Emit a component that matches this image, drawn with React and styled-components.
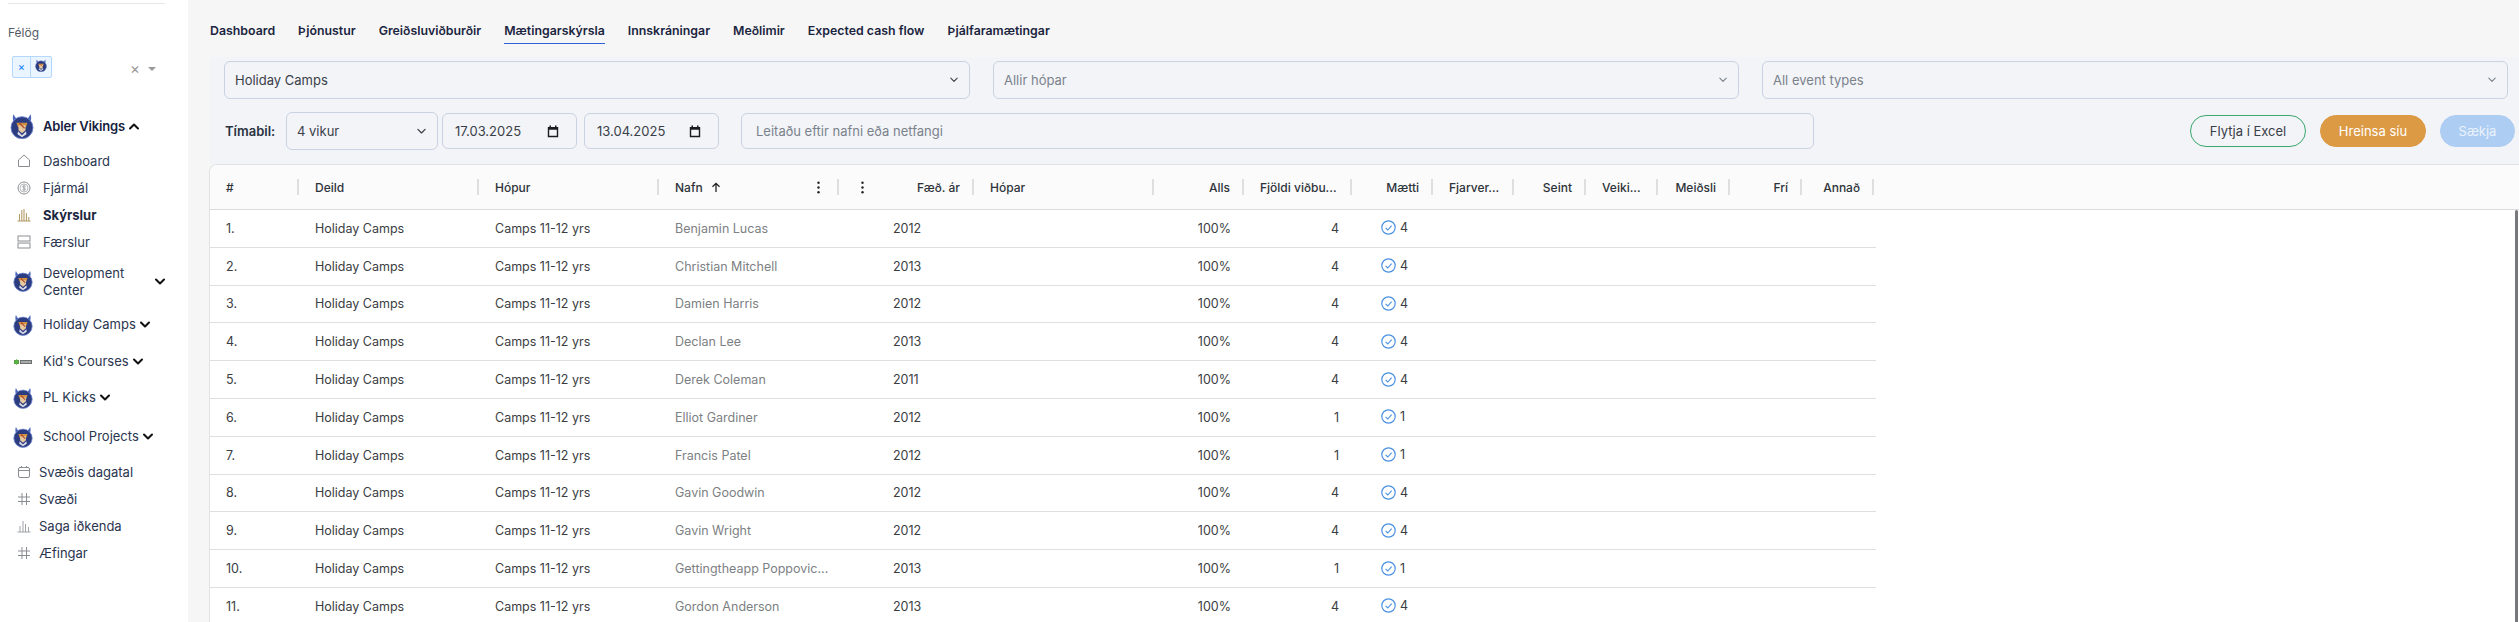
import React from "react";
import styled, { createGlobalStyle } from "styled-components";

const Global = createGlobalStyle`
  html, body { margin: 0; padding: 0; background: #fff; }
  body { font-family: "Inter", "Liberation Sans", sans-serif; font-size: 13px; color: #333; }
  #root { width: 2519px; height: 622px; overflow: hidden; }
`;

const Page = styled.div`
  display: flex;
  width: 2519px;
  height: 622px;
  overflow: hidden;
`;

/* ---------- sidebar ---------- */
const Sidebar = styled.aside`
  flex: 0 0 188px;
  background: #fff;
  color: #1f2a44;
  display: flex;
  flex-direction: column;
`;
const Rule = styled.hr`
  border: 0;
  height: 1px;
  background: #e6e7ea;
  margin: 3px 23px 0 8px;
`;
const FieldLabel = styled.div`
  margin: 21px 0 0 8px;
  line-height: 16px;
  font-size: 12px;
  color: #555b66;
`;
const ClubPicker = styled.div`
  display: flex;
  align-items: center;
  margin: 15px 0 0 12px;
  height: 22px;
`;
const Tag = styled.div`
  display: flex;
  align-items: stretch;
  width: 40px;
  height: 22px;
  box-sizing: border-box;
  border: 1px solid #b3d7ff;
  border-radius: 2px;
  background: #ebf5ff;
`;
const TagRemove = styled.span`
  flex: 0 0 17px;
  display: flex;
  align-items: center;
  justify-content: center;
  color: #007eff;
  font-size: 11px;
  border-right: 1px solid #b3d7ff;
`;
const TagValue = styled.span`
  flex: 1;
  display: flex;
  align-items: center;
  justify-content: center;
  padding-bottom: 3px;
`;
const ClearMark = styled.span`
  margin: 3px 0 0 78px;
  color: #999;
  font-size: 15px;
  line-height: 16px;
`;
const Caret = styled.span`
  margin: 3px 0 0 8px;
  width: 0;
  height: 0;
  border-left: 4px solid transparent;
  border-right: 4px solid transparent;
  border-top: 4px solid #999;
`;
const GroupRow = styled.div`
  display: flex;
  align-items: center;
  min-height: ${(p) => p.$height || 37}px;
  margin-top: ${(p) => p.$top || 0}px;
  font-size: 13px;
  font-weight: ${(p) => (p.$strong ? 600 : 400)};
  letter-spacing: ${(p) => (p.$strong ? "-0.15px" : "0")};
  color: ${(p) => (p.$strong ? "#16213d" : "#2a3550")};
`;
const LogoSlot = styled.span`
  flex: 0 0 43px;
  display: flex;
  align-items: center;
  justify-content: center;
  padding-left: ${(p) => p.$inset || 0}px;
  box-sizing: border-box;
`;
const GroupName = styled.span`
  width: ${(p) => (p.$wrap ? "100px" : "auto")};
  padding-top: ${(p) => (p.$wrap ? "1px" : "0")};
  line-height: 17px;
`;
const GroupChevron = styled.span`
  display: flex;
  margin-left: ${(p) => p.$gap || 4}px;
  color: #111;
`;
const NavRow = styled.div`
  display: flex;
  align-items: center;
  height: 27px;
  margin-top: ${(p) => p.$top || 0}px;
  font-size: 13px;
  font-weight: ${(p) => (p.$active ? 700 : 400)};
  color: ${(p) => (p.$active ? "#1c2740" : "#2a3550")};
`;
const NavIcon = styled.span`
  flex: 0 0 ${(p) => p.$width || 43}px;
  box-sizing: border-box;
  padding-left: 17px;
  display: flex;
  align-items: center;
`;

/* ---------- main ---------- */
const Main = styled.main`
  flex: 1;
  min-width: 0;
  background: #f6f6f7;
  padding-left: 22px;
  display: flex;
  flex-direction: column;
`;
const Tabs = styled.nav`
  flex: 0 0 57px;
  box-sizing: border-box;
  display: flex;
  gap: 23px;
  padding-top: 22px;
`;
const Tab = styled.span`
  height: 21px;
  line-height: 18px;
  font-size: 12.35px;
  font-weight: 600;
  color: #1b2540;
  white-space: nowrap;
  box-sizing: content-box;
  border-bottom: 1px solid ${(p) => (p.$active ? "#2f62d9" : "transparent")};
`;
const FilterPanel = styled.section`
  flex: 0 0 107px;
  box-sizing: border-box;
  background: #f2f4f8;
  padding: 4px 4px 0 14px;
`;
const SelectGrid = styled.div`
  display: grid;
  grid-template-columns: repeat(3, 1fr);
  gap: 23px;
  padding-right: 7px;
`;
const Field = styled.div`
  display: flex;
  align-items: center;
  justify-content: space-between;
  box-sizing: border-box;
  height: ${(p) => p.$height || 38}px;
  width: ${(p) => (p.$width ? `${p.$width}px` : "auto")};
  margin-left: ${(p) => p.$left || 0}px;
  padding: 0 ${(p) => p.$right || 11}px 0 ${(p) => p.$pad || 10}px;
  border: 1px solid #c9d3e2;
  border-radius: 6px;
  font-size: 13px;
  color: ${(p) => (p.$muted ? "#7b828c" : "#3a4048")};
  white-space: nowrap;
`;
const ControlRow = styled.div`
  display: flex;
  align-items: center;
  height: 38px;
  margin-top: 13px;
`;
const PeriodLabel = styled.span`
  flex: 0 0 61px;
  margin-left: 1px;
  font-size: 13px;
  font-weight: 600;
  color: #2b3240;
`;
const ButtonGroup = styled.div`
  margin-left: auto;
  display: flex;
  gap: 14px;
`;
const Pill = styled.button`
  box-sizing: border-box;
  height: 32px;
  width: ${(p) => p.$width}px;
  padding: 0;
  border-radius: 16px;
  border: 1px solid ${(p) => p.$border};
  background: ${(p) => p.$bg};
  color: ${(p) => p.$color};
  font: 400 13px "Inter", "Liberation Sans", sans-serif;
`;

/* ---------- table ---------- */
const TRACKS = "89px 180px 180px 180px 135px 180px 90px 108px 81px 81px 72px 72px 72px 72px 72px";

const TableCard = styled.section`
  position: relative;
  flex: 1;
  min-height: 0;
  background: #fff;
  border-top: 1px solid #dfe1e4;
  border-left: 1px solid #dfe1e4;
  border-top-left-radius: 8px;
  overflow: hidden;
  margin-left: -1px;
`;
const HeaderBar = styled.div`
  height: 44px;
  background: #fbfbfb;
  border-bottom: 1px solid #dcdcdc;
  display: grid;
  grid-template-columns: ${TRACKS};
  align-items: center;
`;
const HeadCell = styled.div`
  display: flex;
  align-items: center;
  min-width: 0;
  height: 16px;
  padding-left: 16px;
  font-size: 12px;
  font-weight: 500;
  color: #2e333a;
`;
const HeadLabel = styled.span`
  flex: 1;
  min-width: 0;
  display: flex;
  align-items: center;
  justify-content: ${(p) => (p.$right ? "flex-end" : "flex-start")};
  margin-right: 12px;
  white-space: nowrap;
`;
const Kebab = styled.span`
  display: flex;
  color: #222;
  flex: 0 0 auto;
  margin: 0 ${(p) => p.$after || 0}px 0 ${(p) => p.$before || 0}px;
`;
const SortMark = styled.span`
  display: flex;
  margin-left: 8px;
`;
const Spacer = styled.span`
  flex: 1;
`;
const Sep = styled.span`
  flex: 0 0 2px;
  height: 16px;
  background: #dedfe1;
`;
const Row = styled.div`
  display: grid;
  grid-template-columns: ${TRACKS};
  align-items: center;
  width: 1666px;
  height: 37.8px;
  box-sizing: border-box;
  border-bottom: 1px solid #dedfe1;
`;
const Cell = styled.div`
  padding: 0 13px 0 ${(p) => p.$left || 16}px;
  min-width: 0;
  font-size: 12.5px;
  color: ${(p) => (p.$muted ? "#7d7f83" : "#3a3d42")};
  text-align: ${(p) => (p.$right ? "right" : "left")};
  white-space: nowrap;
`;
const Attended = styled.div`
  display: flex;
  align-items: center;
  gap: 4px;
  padding-left: 29px;
  margin-top: -1px;
  font-size: 12.5px;
  color: #3a3d42;
`;
const ScrollThumb = styled.div`
  position: absolute;
  top: 45px;
  right: 1px;
  bottom: 0;
  width: 3px;
  border-radius: 2px 2px 0 0;
  background: #77797c;
`;

/* ---------- drawings ---------- */
const Logo = ({ size = 20 }) => (
  <svg width={size} height={size * 1.1} viewBox="0 0 24 26" aria-hidden="true">
    <path d="M3.5 1 C2 5 3 9 6 10 L9 7 C6.5 6 5 4 3.5 1Z M20.5 1 C22 5 21 9 18 10 L15 7 C17.5 6 19 4 20.5 1Z" fill="#4a66bd" />
    <circle cx="12" cy="14.5" r="11" fill="#2c3c80" />
    <circle cx="12" cy="14.5" r="11" fill="none" stroke="#6f86d2" strokeWidth="0.9" />
    <path d="M6.5 9.5 H17.5 L16 14 H8Z" fill="#cf8f42" />
    <path d="M8.5 12 H15.5 V17 L12 20 L8.5 17Z" fill="#e7c9a0" />
    <path d="M8 18 L12 22 L16 18 L16.5 21 L12 24 L7.5 21Z" fill="#dcdce8" />
    <path d="M9.5 10 L14.5 15" stroke="#b2492b" strokeWidth="1.3" />
  </svg>
);
const StripLogo = () => (
  <svg width="18" height="6" viewBox="0 0 18 6" aria-hidden="true">
    <rect x="0" y="1" width="5" height="4" fill="#4f9e3d" />
    <path d="M2.5 0 L5 3 L2.5 6 L0 3Z" fill="#5fae49" />
    <rect x="6" y="1" width="12" height="4" fill="#6d7170" />
    <rect x="7" y="2.4" width="10" height="1.2" fill="#cfd2d0" />
  </svg>
);
const Chevron = ({ up, size = 10, width = 2 }) => (
  <svg width={size} height={size * 0.7} viewBox="0 0 10 7" fill="none" aria-hidden="true">
    <path d={up ? "M1 5.5 L5 1.5 L9 5.5" : "M1 1.5 L5 5.5 L9 1.5"} stroke="currentColor" strokeWidth={width} strokeLinecap="round" strokeLinejoin="round" />
  </svg>
);
const Glyph = ({ children, color = "#8a8d92" }) => (
  <svg width="14" height="14" viewBox="0 0 14 14" fill="none" stroke={color} strokeWidth="1" aria-hidden="true">{children}</svg>
);
const HomeIcon = () => <Glyph><path d="M1.5 6 L7 1 L12.5 6 V12.5 H1.5Z" /></Glyph>;
const MoneyIcon = () => (
  <Glyph>
    <circle cx="7" cy="7" r="6" />
    <circle cx="7" cy="7" r="4" strokeWidth="0.6" />
    <path d="M8.6 5.4 C8 4.6 5.6 4.6 5.6 6 C5.6 7.4 8.6 6.6 8.6 8 C8.6 9.4 6 9.4 5.4 8.6 M7 3.9 V10.1" strokeWidth="0.7" />
  </Glyph>
);
const ReportIcon = () => (
  <Glyph color="#b39a66">
    <path d="M0.5 13 H13.5" />
    <path d="M2.5 13 V6 M4.8 13 V2 M7 13 V1 M9.4 13 V5 M11.8 13 V9" strokeWidth="1.05" />
  </Glyph>
);
const RowsIcon = () => (
  <Glyph>
    <rect x="1" y="1" width="12" height="5" />
    <rect x="1" y="8" width="12" height="5" />
  </Glyph>
);
const CalendarIcon = () => (
  <Glyph>
    <rect x="1.5" y="2.5" width="11" height="10" rx="1.5" />
    <path d="M1.5 5.5 H12.5 M4.5 1 V3 M9.5 1 V3" />
  </Glyph>
);
const HashIcon = () => <Glyph><path d="M5 1 V13 M9.5 1 V13 M1 5 H13 M1 9.5 H13" /></Glyph>;
const BarsIcon = () => (
  <Glyph color="#a0a3a8">
    <path d="M0.5 13 H13.5 M3 13 V7 M6 13 V2 M8.5 13 V5 M11.5 13 V8" />
  </Glyph>
);
const DateGlyph = () => (
  <svg width="12" height="13" viewBox="0 0 12 13" aria-hidden="true">
    <path d="M0.8 2 H11.2 V12.2 H0.8Z M2.2 4.8 V10.8 H9.8 V4.8Z M2.5 0.5 H4 V2 H2.5Z M8 0.5 H9.5 V2 H8Z" fill="#1c1c1c" fillRule="evenodd" />
  </svg>
);
const KebabGlyph = () => (
  <svg width="3" height="13" viewBox="0 0 3 13" aria-hidden="true">
    <circle cx="1.5" cy="1.7" r="1.2" fill="currentColor" />
    <circle cx="1.5" cy="6.5" r="1.2" fill="currentColor" />
    <circle cx="1.5" cy="11.3" r="1.2" fill="currentColor" />
  </svg>
);
const SortUp = () => (
  <svg width="10" height="11" viewBox="0 0 10 11" fill="none" aria-hidden="true">
    <path d="M5 10 V1.5 M1.5 4.8 L5 1.3 L8.5 4.8" stroke="#222" strokeWidth="1.3" />
  </svg>
);
const CheckCircle = () => (
  <svg width="15" height="15" viewBox="0 0 15 15" fill="none" aria-hidden="true">
    <circle cx="7.5" cy="7.5" r="6.7" stroke="#4a90e2" strokeWidth="1.2" />
    <path d="M4.6 7.8 L6.8 10 L10.6 5.6" stroke="#4a90e2" strokeWidth="1.1" />
  </svg>
);

/* ---------- data ---------- */
const MEMBERS = [
  ["Benjamin Lucas", 2012, 4],
  ["Christian Mitchell", 2013, 4],
  ["Damien Harris", 2012, 4],
  ["Declan Lee", 2013, 4],
  ["Derek Coleman", 2011, 4],
  ["Elliot Gardiner", 2012, 1],
  ["Francis Patel", 2012, 1],
  ["Gavin Goodwin", 2012, 4],
  ["Gavin Wright", 2012, 4],
  ["Gettingtheapp Poppovic...", 2013, 1],
  ["Gordon Anderson", 2013, 4],
];
const TABS = ["Dashboard", "Þjónustur", "Greiðsluviðburðir", "Mætingarskýrsla", "Innskráningar", "Meðlimir", "Expected cash flow", "Þjálfaramætingar"];
const RIGHT_HEADS = [
  ["Alls", true], ["Fjöldi viðbu...", false], ["Mætti", true], ["Fjarver...", false], ["Seint", true],
  ["Veiki...", false], ["Meiðsli", true], ["Frí", true], ["Annað", true],
];

export default function App() {
  return (
    <Page>
      <Global />
      <Sidebar>
        <Rule />
        <FieldLabel>Félög</FieldLabel>
        <ClubPicker>
          <Tag>
            <TagRemove>×</TagRemove>
            <TagValue><Logo size={12} /></TagValue>
          </Tag>
          <ClearMark>×</ClearMark>
          <Caret />
        </ClubPicker>
        <GroupRow $strong $top={30}>
          <LogoSlot><Logo size={24} /></LogoSlot>
          <GroupName>Abler Vikings</GroupName>
          <GroupChevron><Chevron up /></GroupChevron>
        </GroupRow>
        <NavRow $top={2}><NavIcon><HomeIcon /></NavIcon>Dashboard</NavRow>
        <NavRow><NavIcon><MoneyIcon /></NavIcon>Fjármál</NavRow>
        <NavRow $active><NavIcon><ReportIcon /></NavIcon>Skýrslur</NavRow>
        <NavRow><NavIcon><RowsIcon /></NavIcon>Færslur</NavRow>
        <GroupRow $height={44} $top={4}>
          <LogoSlot $inset={3}><Logo size={20} /></LogoSlot>
          <GroupName $wrap>Development Center</GroupName>
          <GroupChevron $gap={12}><Chevron /></GroupChevron>
        </GroupRow>
        <GroupRow $top={3}>
          <LogoSlot $inset={3}><Logo size={20} /></LogoSlot>
          <GroupName>Holiday Camps</GroupName>
          <GroupChevron><Chevron /></GroupChevron>
        </GroupRow>
        <GroupRow>
          <LogoSlot $inset={3}><StripLogo /></LogoSlot>
          <GroupName>Kid's Courses</GroupName>
          <GroupChevron><Chevron /></GroupChevron>
        </GroupRow>
        <GroupRow $top={-1}>
          <LogoSlot $inset={3}><Logo size={20} /></LogoSlot>
          <GroupName>PL Kicks</GroupName>
          <GroupChevron><Chevron /></GroupChevron>
        </GroupRow>
        <GroupRow $top={2}>
          <LogoSlot $inset={3}><Logo size={20} /></LogoSlot>
          <GroupName>School Projects</GroupName>
          <GroupChevron><Chevron /></GroupChevron>
        </GroupRow>
        <NavRow $top={3}><NavIcon $width={39}><CalendarIcon /></NavIcon>Svæðis dagatal</NavRow>
        <NavRow><NavIcon $width={39}><HashIcon /></NavIcon>Svæði</NavRow>
        <NavRow><NavIcon $width={39}><BarsIcon /></NavIcon>Saga iðkenda</NavRow>
        <NavRow><NavIcon $width={39}><HashIcon /></NavIcon>Æfingar</NavRow>
      </Sidebar>

      <Main>
        <Tabs>
          {TABS.map((t) => (
            <Tab key={t} $active={t === "Mætingarskýrsla"}>{t}</Tab>
          ))}
        </Tabs>

        <FilterPanel>
          <SelectGrid>
            <Field>Holiday Camps<Chevron size={8} width={1.4} /></Field>
            <Field $muted>Allir hópar<Chevron size={8} width={1.4} /></Field>
            <Field $muted>All event types<Chevron size={8} width={1.4} /></Field>
          </SelectGrid>
          <ControlRow>
            <PeriodLabel>Tímabil:</PeriodLabel>
            <Field $width={152}>4 vikur<Chevron size={9} width={1.4} /></Field>
            <Field $width={135} $height={36} $left={4} $pad={12} $right={17}>17.03.2025<DateGlyph /></Field>
            <Field $width={135} $height={36} $left={7} $pad={12} $right={17}>13.04.2025<DateGlyph /></Field>
            <Field $width={1073} $height={36} $left={22} $pad={14} $muted>Leitaðu eftir nafni eða netfangi</Field>
            <ButtonGroup>
              <Pill $width={116} $border="#3aa76d" $bg="transparent" $color="#3a4048">Flytja í Excel</Pill>
              <Pill $width={106} $border="#dc9a44" $bg="#dc9a44" $color="#fff">Hreinsa síu</Pill>
              <Pill $width={75} $border="#aecdf2" $bg="#aecdf2" $color="#eaf2fc">Sækja</Pill>
            </ButtonGroup>
          </ControlRow>
        </FilterPanel>

        <TableCard>
          <HeaderBar>
            <HeadCell><HeadLabel>#</HeadLabel><Sep /></HeadCell>
            <HeadCell><HeadLabel>Deild</HeadLabel><Sep /></HeadCell>
            <HeadCell><HeadLabel>Hópur</HeadLabel><Sep /></HeadCell>
            <HeadCell>
              <HeadLabel>Nafn<SortMark><SortUp /></SortMark><Spacer /><Kebab $after={5}><KebabGlyph /></Kebab></HeadLabel>
              <Sep />
            </HeadCell>
            <HeadCell>
              <HeadLabel $right><Kebab $before={6}><KebabGlyph /></Kebab><Spacer />Fæð. ár</HeadLabel>
              <Sep />
            </HeadCell>
            <HeadCell><HeadLabel>Hópar</HeadLabel><Sep /></HeadCell>
            {RIGHT_HEADS.map(([label, right]) => (
              <HeadCell key={label}>
                <HeadLabel $right={right}>{label}</HeadLabel>
                <Sep />
              </HeadCell>
            ))}
          </HeaderBar>
          {MEMBERS.map(([name, year, count], i) => (
            <Row key={name}>
              <Cell>{i + 1}.</Cell>
              <Cell>Holiday Camps</Cell>
              <Cell>Camps 11-12 yrs</Cell>
              <Cell $muted>{name}</Cell>
              <Cell $left={54}>{year}</Cell>
              <Cell />
              <Cell $right>100%</Cell>
              <Cell $right>{count}</Cell>
              <Attended><CheckCircle />{count}</Attended>
            </Row>
          ))}
          <ScrollThumb />
        </TableCard>
      </Main>
    </Page>
  );
}
